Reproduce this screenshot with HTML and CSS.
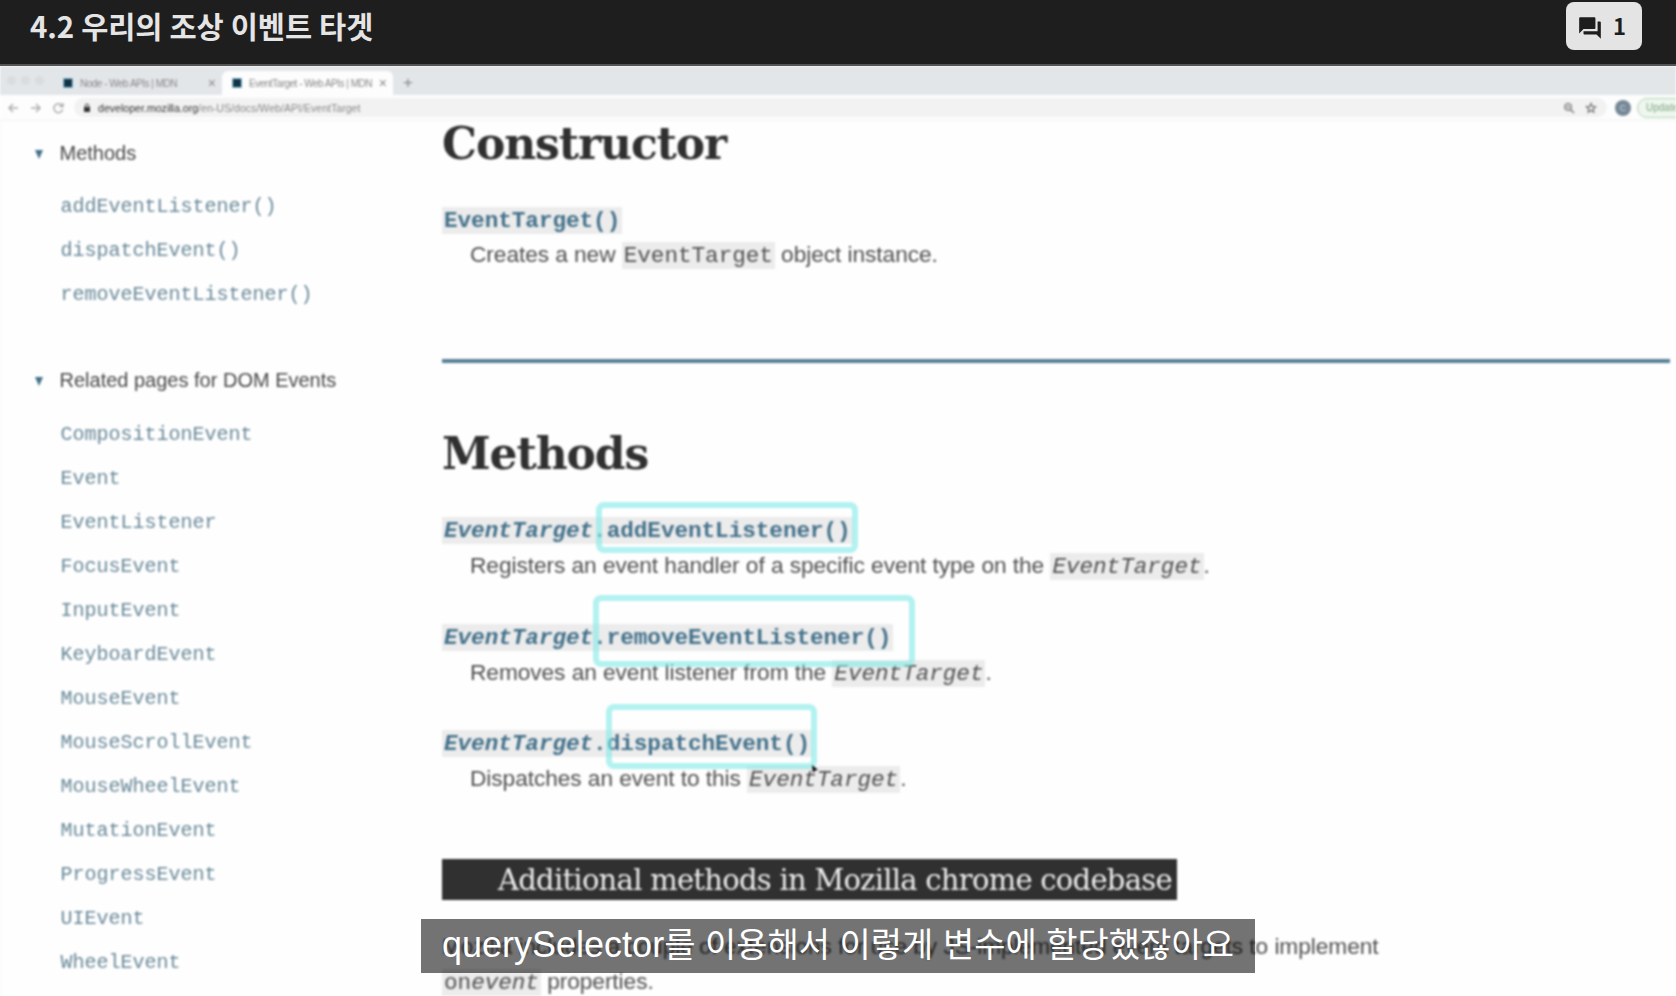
FILE: index.html
```html
<!DOCTYPE html>
<html lang="ko">
<head>
<meta charset="utf-8">
<title>4.2 우리의 조상 이벤트 타겟</title>
<link rel="stylesheet" href="styles.css">
</head>
<body>
<header class="topbar">
  <h1 class="lesson-title">4.2 우리의 조상 이벤트 타겟</h1>
  <button class="comments">
    <svg class="comments-icon" viewBox="0 0 24 24"><path d="M21 6h-2v9H6v2c0 .55.45 1 1 1h11l4 4V7c0-.55-.45-1-1-1zm-4 6V3c0-.55-.45-1-1-1H3c-.55 0-1 .45-1 1v14l4-4h10c.55 0 1-.45 1-1z"/></svg>
    <span>1</span>
  </button>
</header>
<main class="player">
  <div class="video">
    <div class="tabs">
      <div class="lights"><i></i><i></i><i></i></div>
      <div class="tab tab-idle"><i class="favicon"></i><span class="tab-name">Node - Web APIs | MDN</span><span class="close">×</span></div>
      <div class="tab tab-active"><i class="favicon"></i><span class="tab-name">EventTarget - Web APIs | MDN</span><span class="close">×</span></div>
      <span class="plus">+</span>
    </div>
    <div class="toolbar">
      <svg class="nav" viewBox="0 0 74 22" fill="none" stroke-width="1.4"><path stroke="#aaa" d="M18 11H9m4-4-4 4 4 4M31 11h9m-4-4 4 4-4 4"/><path stroke="#aaa" d="M62 8.500a4.500 4.500 0 1 0 .7 4M63 6v3.500h-3.500"/></svg>
      <div class="address">
        <svg class="lock" viewBox="0 0 8 10"><path d="M1 4h6v5H1z" fill="#333"/><path d="M2.300 4V2.800a1.700 1.700 0 0 1 3.400 0V4" fill="none" stroke="#333"/></svg>
        <span class="url"><b>developer.mozilla.org</b>/en-US/docs/Web/API/EventTarget</span>
        <svg class="tools" viewBox="0 0 36 12" fill="none" stroke="#777" stroke-width="1.300"><circle cx="5" cy="5" r="3.300"/><path d="m7.500 7.500 3.500 3.500M3.500 5h3M28 1.500l1.300 3 3.200.3-2.400 2.100.7 3.200-2.800-1.700-2.800 1.700.7-3.200-2.400-2.100 3.200-.3z"/></svg>
      </div>
      <span class="avatar">C</span>
      <span class="update">Update</span>
    </div>
    <div class="page">
      <nav class="sidebar">
        <div class="group-title"><i class="arrow"></i>Methods</div>
        <ul class="links">
          <li>addEventListener()</li><li>dispatchEvent()</li><li>removeEventListener()</li>
        </ul>
        <div class="group-title group-second"><i class="arrow"></i>Related pages for DOM Events</div>
        <ul class="links">
          <li>CompositionEvent</li><li>Event</li><li>EventListener</li><li>FocusEvent</li><li>InputEvent</li><li>KeyboardEvent</li><li>MouseEvent</li><li>MouseScrollEvent</li><li>MouseWheelEvent</li><li>MutationEvent</li><li>ProgressEvent</li><li>UIEvent</li><li>WheelEvent</li>
        </ul>
      </nav>
      <article class="article">
        <h2 class="heading">Constructor</h2>
        <dl class="entry entry-first">
          <dt><code>EventTarget()</code></dt>
          <dd>Creates a new <code>EventTarget</code> object instance.</dd>
        </dl>
        <hr class="rule">
        <h2 class="heading">Methods</h2>
        <div class="entries">
          <dl class="entry">
            <dt><code><i>EventTarget</i>.addEventListener()</code></dt>
            <dd>Registers an event handler of a specific event type on the <code><i>EventTarget</i></code>.</dd>
          </dl>
          <dl class="entry">
            <dt><code><i>EventTarget</i>.removeEventListener()</code></dt>
            <dd>Removes an event listener from the <code><i>EventTarget</i></code>.</dd>
          </dl>
          <dl class="entry">
            <dt><code><i>EventTarget</i>.dispatchEvent()</code></dt>
            <dd>Dispatches an event to this <code><i>EventTarget</i></code>.</dd>
          </dl>
        </div>
        <h3 class="subheading"><span>Additional methods in Mozilla chrome codebase</span></h3>
        <p class="note">Mozilla includes a couple of extensions for use by JS-implemented event targets to implement<br><code>on<i>event</i></code> properties.</p>
      </article>
    </div>
    <div class="mark mark-add"></div>
    <div class="mark mark-remove"></div>
    <div class="mark mark-dispatch"></div>
    <svg class="pointer" viewBox="0 0 8 8"><path d="M1 0l6 5-3 .5L2 8z"/></svg>
  </div>
  <div class="caption">querySelector<span class="caption-ko">를 이용해서 이렇게 변수에 할당했잖아요</span></div>
</main>
</body>
</html>
```
FILE: styles.css
```css
* { box-sizing: border-box; margin: 0; padding: 0; }
body { width: 1676px; height: 996px; overflow: hidden; background: #1e1e1e; font-family: "Liberation Sans", "Noto Sans CJK KR", sans-serif; }

.topbar { height: 66px; display: flex; justify-content: space-between; align-items: flex-start; padding: 2px 34px 0 30px; background: #1e1e1e; border-bottom: 2px solid #545454; }
.lesson-title { font: 700 29.500px/46px "Noto Sans CJK KR", sans-serif; letter-spacing: -0.1px; word-spacing: -1px; color: #e5e5e5; white-space: nowrap; }
.comments { width: 76px; height: 48px; border: 0; border-radius: 8px; background: #e4e4e4; color: #1e1e1e; display: flex; align-items: center; padding-left: 11px; gap: 10px; font: 700 22px/46px "Noto Sans CJK KR", sans-serif; }
.comments span { margin-top: -2px; }
.comments-icon { width: 26px; height: 26px; fill: #1e1e1e; margin-top: 3px; }

.player { position: relative; height: 930px; overflow: hidden; background: #fefefe; }
.video { position: relative; height: 930px; overflow: hidden; filter: blur(0.8px); background: #fefefe; }

.tabs { height: 29px; display: flex; align-items: flex-end; background: #e3e6e9; color: #888; font-size: 10px; }
.lights { display: flex; gap: 5px; width: 54px; padding-left: 7px; height: 19px; }
.lights i { width: 9px; height: 9px; border-radius: 50%; background: #dadcde; }
.tab { height: 24px; display: flex; align-items: center; white-space: nowrap; border-radius: 6px 6px 0 0; }
.tab-idle { width: 168px; padding-left: 9px; }
.tab-active { width: 171px; padding-left: 10px; background: #fdfdfd; }
.favicon { width: 10px; height: 10px; background: #123346; border: 1.500px solid #88bfdb; flex: none; }
.tab-name { margin-left: 7px; letter-spacing: -0.5px; flex: 1; filter: blur(0.5px); }
.close { font-size: 14px; margin-right: 6px; }
.plus { margin-left: 10px; font-size: 17px; line-height: 25px; }

.toolbar { height: 26px; display: flex; align-items: center; background: #fdfdfd; border-bottom: 1px solid #f2f2f2; }
.nav { width: 74px; height: 22px; flex: none; }
.address { width: 1533px; flex: none; height: 19px; border-radius: 10px; background: #f2f2f2; display: flex; align-items: center; padding: 0 8px 0 9px; font-size: 10.6px; color: #888; }
.lock { width: 8px; height: 10px; margin-right: 7px; }
.url { flex: 1; filter: blur(0.4px); }
.url b { font-weight: 400; color: #333; }
.tools { width: 36px; height: 12px; }
.avatar { width: 16px; height: 16px; margin-left: 8px; border-radius: 50%; background: #768897; color: #c9d3dc; font-size: 9px; line-height: 16px; text-align: center; flex: none; }
.update { margin-left: 6px; width: 70px; height: 20px; flex: none; border: 1px solid #b4d3b8; border-radius: 10px; background: #eef6ee; color: #7fa584; font-size: 10px; line-height: 18px; padding-left: 8px; }

.page { display: flex; height: 875px; border-left: 1px solid #f4f6f8; }
.sidebar { width: 441px; padding: 12px 0 0 33px; flex: none; }
.group-title { display: flex; align-items: center; height: 40px; font-size: 20px; color: #484848; }
.group-second { margin-top: 43.400px; }
.arrow { width: 0; height: 0; border: 4.500px solid transparent; border-top: 9px solid #42708a; border-bottom: 0; margin-left: 1px; margin-right: 16.500px; margin-top: 2px; }
.links { list-style: none; margin: 12px 0 0 26.500px; font: 20px/44.050px "Liberation Mono", monospace; color: #688898; }
.links li { height: 44.050px; }

.article { flex: 1; padding-top: 1px; color: #505050; font-size: 22.700px; letter-spacing: -0.060px; white-space: nowrap; }
.heading { height: 42px; font: 700 44px/44px "DejaVu Serif", serif; letter-spacing: -1.1px; color: #303030; }
.entry { height: 69px; }
.entry-first { margin-top: 39.500px; }
.entry-first dd { margin-top: -0.500px; }
.entry dt { height: 34px; font: 700 22.700px/34px "Liberation Mono", monospace; color: #42708a; }
.entry dd { height: 35px; line-height: 35px; padding-left: 28px; }
.article code { font-family: "Liberation Mono", monospace; font-size: 22.700px; background: #ececec; padding: 1px 2px 0; }
.rule { height: 4px; width: 1228px; border: 0; background: #577f96; margin: 86px 0 69.700px; }
.entries { display: flex; flex-direction: column; gap: 37.500px; margin-top: 40.300px; }
.subheading { width: 735px; height: 41px; margin-top: 63px; padding-left: 56px; background: #303030; color: #eee; font: 400 29px/43px "DejaVu Serif", serif; letter-spacing: -0.730px; }
.note { margin-top: 28.500px; line-height: 35px; }

.mark { position: absolute; border: 6px solid rgba(130, 234, 230, 0.62); border-radius: 8px; }
.mark-add { left: 596px; top: 436px; width: 262px; height: 51px; }
.mark-remove { left: 593px; top: 529px; width: 322px; height: 72px; }
.mark-dispatch { left: 606px; top: 638px; width: 211px; height: 65px; }
.pointer { position: absolute; left: 811px; top: 699px; width: 8px; height: 8px; }

.caption { position: absolute; left: 421px; top: 853px; width: 834px; height: 54px; padding-left: 21px; background: rgba(0, 0, 0, 0.55); color: #fff; font-size: 36px; line-height: 52px; white-space: nowrap; }
.caption-ko { font-family: "Noto Sans CJK KR", sans-serif; font-size: 34px; line-height: 1; }
```
